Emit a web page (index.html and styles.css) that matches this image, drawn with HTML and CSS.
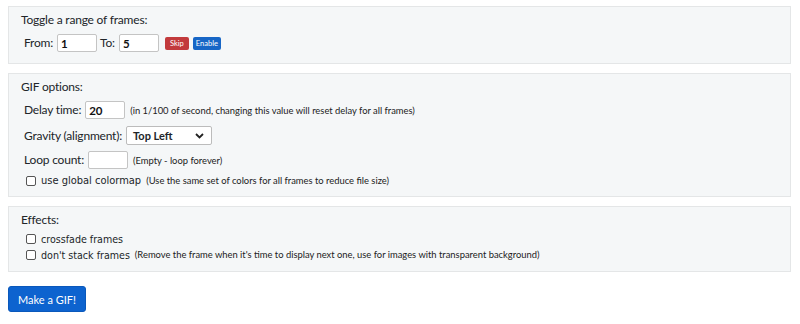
FILE: index.html
```html
<!DOCTYPE html>
<html>
<head>
<meta charset="utf-8">
<link rel="stylesheet" href="styles.css">
</head>
<body>
<div class="page">
  <div class="panel p1">
    <div class="title">Toggle a range of frames:</div>
    <div class="row range">
      <span class="lbl">From:</span>
      <input class="inp" type="text" value="1">
      <span class="lbl">To:</span>
      <input class="inp" type="text" value="5">
      <button class="btn-sm skip">Skip</button>
      <button class="btn-sm enable">Enable</button>
    </div>
  </div>

  <div class="panel p2">
    <div class="title">GIF options:</div>
    <div class="row r-delay">
      <span class="lbl">Delay time:</span>
      <input class="inp" type="text" value="20">
      <span class="note">(in 1/100 of second, changing this value will reset delay for all frames)</span>
    </div>
    <div class="row r-grav">
      <span class="lbl">Gravity (alignment):</span>
      <div class="select"><span>Top Left</span>
        <svg width="9" height="6" viewBox="0 0 9 6"><path d="M1 1l3.5 3.5L8 1" fill="none" stroke="#222" stroke-width="1.8"/></svg>
      </div>
    </div>
    <div class="row r-loop">
      <span class="lbl">Loop count:</span>
      <input class="inp" type="text" value="">
      <span class="note">(Empty - loop forever)</span>
    </div>
    <label class="check r-cmap"><span class="box"></span><span class="ctext">use global colormap</span> <span class="note">(Use the same set of colors for all frames to reduce file size)</span></label>
  </div>

  <div class="panel p3">
    <div class="title">Effects:</div>
    <label class="check small c1"><span class="box"></span><span class="ctext">crossfade frames</span></label>
    <label class="check small c2"><span class="box"></span><span class="ctext">don't stack frames</span> <span class="note">(Remove the frame when it's time to display next one, use for images with transparent background)</span></label>
  </div>

  <button class="make">Make a GIF!</button>
</div>
</body>
</html>
```

FILE: styles.css
```css
html, body {
  margin: 0;
  padding: 0;
  background: #ffffff;
}
body {
  font-family: Lato, "Open Sans", sans-serif;
  color: #212529;
  font-size: 12px;
  letter-spacing: -0.2px;
}
.page {
  padding: 6px 9px 0 8px;
  display: flex;
  flex-direction: column;
  align-items: flex-start;
}
.panel {
  box-sizing: border-box;
  align-self: stretch;
  background: #f5f7f8;
  border: 1px solid #e4e6e7;
  padding: 5px 12px 0 12px;
}
.p1 { height: 58px; margin-bottom: 9px; }
.p2 { height: 124px; margin-bottom: 9px; }
.p3 { height: 66px; margin-bottom: 14px; }
.title {
  font-size: 12px;
  line-height: 16px;
}
.row {
  display: flex;
  align-items: center;
  padding-left: 3px;
}
.range { margin-top: 6px; }
.lbl { line-height: 18px; }
.inp {
  box-sizing: border-box;
  width: 40px;
  height: 18px;
  border: 1px solid #c4c4c4;
  border-radius: 2px;
  background: #fff;
  margin: 0 3px 0 4px;
  padding: 0 3px;
  font-family: Lato, sans-serif;
  font-size: 11.5px;
  font-weight: 700;
  color: #111;
}
.btn-sm {
  height: 13px;
  border: 0;
  border-radius: 2px;
  color: #fff;
  font-family: Lato, sans-serif;
  font-size: 7.5px;
  letter-spacing: 0;
  padding: 0;
  margin-left: 4px;
  line-height: 13px;
}
.skip { background: #c23a3c; margin-left: 3px; width: 24px; }
.enable { background: #1766c6; width: 28px; }
.r-delay { margin-top: 6px; }
.r-grav { margin-top: 7px; }
.r-loop { margin-top: 6px; }
.note {
  font-size: 9.4px;
  letter-spacing: 0;
  color: #222;
  margin-left: 2px;
}
.select {
  box-sizing: border-box;
  width: 86px;
  height: 19px;
  background: #fff;
  border: 1px solid #bcbcbc;
  border-radius: 2px;
  margin-left: 4px;
  display: flex;
  align-items: center;
  justify-content: space-between;
  padding: 0 7px 0 6px;
  font-size: 11px;
  font-weight: 700;
  letter-spacing: 0;
}
.check {
  display: flex;
  align-items: center;
  padding-left: 5px;
  line-height: 16px;
}
.box {
  box-sizing: border-box;
  width: 10px;
  height: 10px;
  border: 1px solid #555;
  border-radius: 2px;
  background: #fff;
  margin-right: 5px;
}
.ctext {
  font-family: "DejaVu Sans Condensed", "DejaVu Sans", sans-serif;
  font-size: 11px;
  letter-spacing: 0;
  margin-right: 3px;
}
.small .ctext { font-size: 10.6px; }
.r-cmap { margin-top: 4px; }
.c1 { margin-top: 3px; }
.c2 { margin-top: 0; }
.make {
  width: 78px;
  height: 26px;
  background: #0d63cf;
  border: 1px solid #0a58bb;
  border-radius: 3px;
  color: #fff;
  font-family: Lato, sans-serif;
  font-size: 11px;
  padding: 0;
}
```
